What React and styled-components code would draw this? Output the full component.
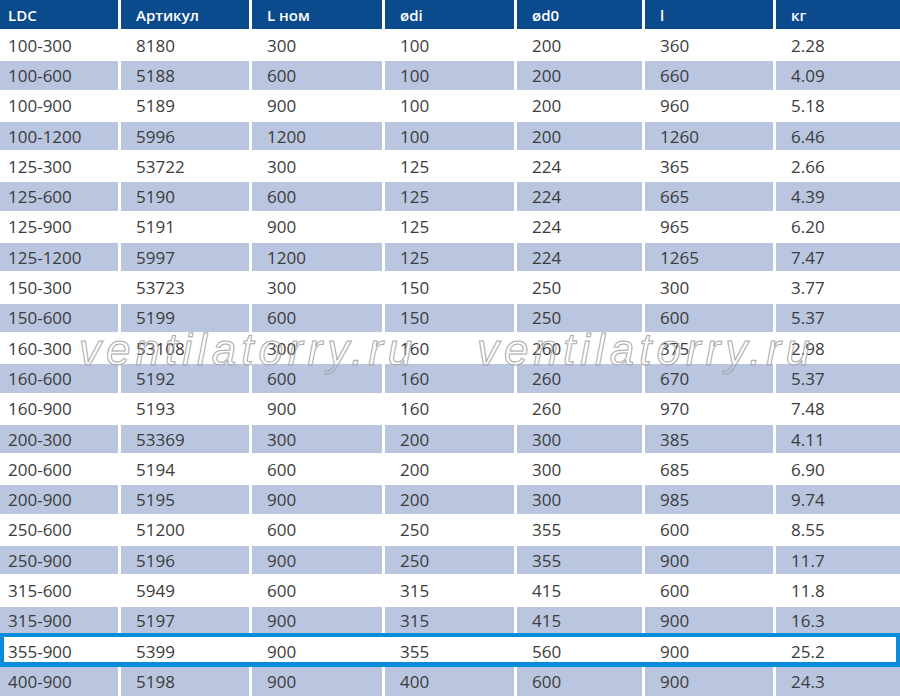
import React from "react";
import styled, { createGlobalStyle } from "styled-components";

const GlobalStyle = createGlobalStyle`
  body {
    margin: 0;
    background: #fff;
    font-family: "Open Sans", "Noto Sans", sans-serif;
  }
`;

const columns = ["LDC", "Артикул", "L ном", "ødi", "ød0", "l", "кг"];

const rows = [
  ["100-300", "8180", "300", "100", "200", "360", "2.28"],
  ["100-600", "5188", "600", "100", "200", "660", "4.09"],
  ["100-900", "5189", "900", "100", "200", "960", "5.18"],
  ["100-1200", "5996", "1200", "100", "200", "1260", "6.46"],
  ["125-300", "53722", "300", "125", "224", "365", "2.66"],
  ["125-600", "5190", "600", "125", "224", "665", "4.39"],
  ["125-900", "5191", "900", "125", "224", "965", "6.20"],
  ["125-1200", "5997", "1200", "125", "224", "1265", "7.47"],
  ["150-300", "53723", "300", "150", "250", "300", "3.77"],
  ["150-600", "5199", "600", "150", "250", "600", "5.37"],
  ["160-300", "53108", "300", "160", "260", "375", "2.98"],
  ["160-600", "5192", "600", "160", "260", "670", "5.37"],
  ["160-900", "5193", "900", "160", "260", "970", "7.48"],
  ["200-300", "53369", "300", "200", "300", "385", "4.11"],
  ["200-600", "5194", "600", "200", "300", "685", "6.90"],
  ["200-900", "5195", "900", "200", "300", "985", "9.74"],
  ["250-600", "51200", "600", "250", "355", "600", "8.55"],
  ["250-900", "5196", "900", "250", "355", "900", "11.7"],
  ["315-600", "5949", "600", "315", "415", "600", "11.8"],
  ["315-900", "5197", "900", "315", "415", "900", "16.3"],
  ["355-900", "5399", "900", "355", "560", "900", "25.2"],
  ["400-900", "5198", "900", "400", "600", "900", "24.3"],
];

const HIGHLIGHT = "355-900";

export default function App() {
  return (
    <>
      <GlobalStyle />
      <Page>
        <Table>
          <Row $header>
            {columns.map((c, i) => (
              <HeadCell key={c} $first={i === 0}>{c}</HeadCell>
            ))}
          </Row>
          {rows.map((r, idx) => (
            <Row key={r[0]} $active={r[0] === HIGHLIGHT}>
              {r.map((v, i) => (
                <Cell key={i} $first={i === 0} $shade={idx % 2 === 1}>
                  {v}
                </Cell>
              ))}
            </Row>
          ))}
        </Table>
        <Watermark $left={79}>ventilatorry.ru</Watermark>
        <Watermark $left={477}>ventilatorry.ru</Watermark>
      </Page>
    </>
  );
}

const Page = styled.div`
  position: relative;
  width: 900px;
  height: 698px;
  overflow: hidden;
`;

const Table = styled.div`
  display: flex;
  flex-direction: column;
  gap: 2px;
`;

const Row = styled.div`
  position: relative;
  display: grid;
  grid-template-columns: 118px 128px 130px 129px 125px 128px 1fr;
  column-gap: 3px;
  height: ${p => (p.$header ? "29px" : "28.3px")};

  ${p => p.$active && `
    &::after {
      content: "";
      position: absolute;
      top: -4px;
      bottom: -2px;
      left: 0;
      right: 0;
      border: 4px solid #0a8cdc;
      border-bottom-width: 5px;
      pointer-events: none;
    }
  `}
`;

const HeadCell = styled.div`
  display: flex;
  align-items: center;
  padding-left: ${p => (p.$first ? "8px" : "15px")};
  background: #0b4a8c;
  color: #fff;
  font-size: 15px;
  font-weight: 600;
`;

const Cell = styled.div`
  display: flex;
  align-items: center;
  padding-left: ${p => (p.$first ? "8px" : "15px")};
  background: ${p => (p.$shade ? "#bac6e0" : "#fff")};
  color: #3c3c3c;
  font-size: 17px;
`;

const Watermark = styled.div`
  position: absolute;
  top: 328px;
  left: ${p => p.$left}px;
  font-family: "Liberation Sans", Arial, sans-serif;
  font-style: italic;
  font-size: 44px;
  line-height: 44px;
  letter-spacing: 5px;
  color: transparent;
  -webkit-text-stroke: 1px #a8a8a8;
  white-space: nowrap;
  pointer-events: none;
`;
